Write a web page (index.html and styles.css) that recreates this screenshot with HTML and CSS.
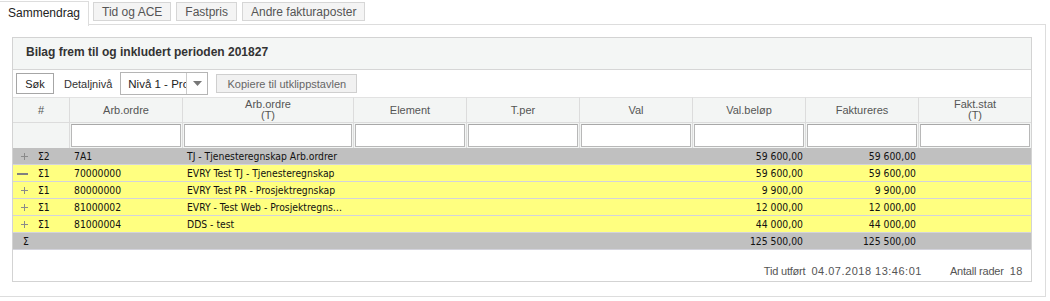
FILE: index.html
```html
<!DOCTYPE html>
<html lang="no">
<head>
    <meta charset="UTF-8">
    <title>Sammendrag</title>
    <link rel="stylesheet" href="styles.css">
</head>
<body>
    <div class="tabs">
        <div class="tab active">Sammendrag</div>
        <div class="tab">Tid og ACE</div>
        <div class="tab">Fastpris</div>
        <div class="tab">Andre fakturaposter</div>
    </div>

    <div class="frame">
        <div class="panel">
            <div class="panel-head">Bilag frem til og inkludert perioden 201827</div>

            <div class="toolbar">
                <button class="btn">Søk</button>
                <span class="lbl">Detaljnivå</span>
                <div class="select">
                    <span class="sel-val">Nivå 1 - Prosjekt</span>
                    <span class="sel-btn">
                        <svg width="9" height="5" viewBox="0 0 9 5"><path d="M0 0h9L4.5 5z" fill="#777"/></svg>
                    </span>
                </div>
                <button class="btn btn-grey">Kopiere til utklippstavlen</button>
            </div>

            <table class="grid">
                <colgroup>
                    <col style="width:57px">
                    <col style="width:113px">
                    <col style="width:171px">
                    <col style="width:113px">
                    <col style="width:113px">
                    <col style="width:113px">
                    <col style="width:113px">
                    <col style="width:113px">
                    <col style="width:112px">
                </colgroup>
                <thead>
                    <tr class="head">
                        <th>#</th>
                        <th>Arb.ordre</th>
                        <th>Arb.ordre<br>(T)</th>
                        <th>Element</th>
                        <th>T.per</th>
                        <th>Val</th>
                        <th>Val.beløp</th>
                        <th>Faktureres</th>
                        <th>Fakt.stat<br>(T)</th>
                    </tr>
                    <tr class="filter">
                        <td></td>
                        <td><input type="text"></td>
                        <td><input type="text"></td>
                        <td><input type="text"></td>
                        <td><input type="text"></td>
                        <td><input type="text"></td>
                        <td><input type="text"></td>
                        <td><input type="text"></td>
                        <td><input type="text"></td>
                    </tr>
                </thead>
                <tbody>
                    <tr class="grey">
                        <td><span class="tog plus"></span><span class="sig">Σ2</span></td>
                        <td>7A1</td>
                        <td class="clip">TJ - Tjenesteregnskap Arb.ordrer</td>
                        <td></td><td></td><td></td>
                        <td class="num">59 600,00</td>
                        <td class="num">59 600,00</td>
                        <td></td>
                    </tr>
                    <tr class="yellow">
                        <td><span class="tog minus"></span><span class="sig">Σ1</span></td>
                        <td>70000000</td>
                        <td class="clip">EVRY Test TJ - Tjenesteregnskap</td>
                        <td></td><td></td><td></td>
                        <td class="num">59 600,00</td>
                        <td class="num">59 600,00</td>
                        <td></td>
                    </tr>
                    <tr class="yellow">
                        <td><span class="tog plus"></span><span class="sig">Σ1</span></td>
                        <td>80000000</td>
                        <td class="clip">EVRY Test PR - Prosjektregnskap</td>
                        <td></td><td></td><td></td>
                        <td class="num">9 900,00</td>
                        <td class="num">9 900,00</td>
                        <td></td>
                    </tr>
                    <tr class="yellow">
                        <td><span class="tog plus"></span><span class="sig">Σ1</span></td>
                        <td>81000002</td>
                        <td class="clip">EVRY - Test Web - Prosjektregnskap</td>
                        <td></td><td></td><td></td>
                        <td class="num">12 000,00</td>
                        <td class="num">12 000,00</td>
                        <td></td>
                    </tr>
                    <tr class="yellow">
                        <td><span class="tog plus"></span><span class="sig">Σ1</span></td>
                        <td>81000004</td>
                        <td class="clip">DDS - test</td>
                        <td></td><td></td><td></td>
                        <td class="num">44 000,00</td>
                        <td class="num">44 000,00</td>
                        <td></td>
                    </tr>
                    <tr class="grey sum">
                        <td><span class="sig">Σ</span></td>
                        <td></td><td></td><td></td><td></td><td></td>
                        <td class="num">125 500,00</td>
                        <td class="num">125 500,00</td>
                        <td></td>
                    </tr>
                </tbody>
            </table>

            <div class="foot">
                <span class="key">Tid utført</span><span class="val">04.07.2018 13:46:01</span>
                <span class="key gap">Antall rader</span><span class="val">18</span>
            </div>
        </div>
    </div>
</body>
</html>
```

FILE: styles.css
```css
body {
    margin: 0;
    font-family: "Liberation Sans", Arial, sans-serif;
    background-color: #fff;
    color: #333;
}

/* tab strip above the frame */
.tabs {
    display: flex;
    align-items: flex-start;
    height: 24px;
}
.tab {
    font-size: 12px;
    height: 17px;
    line-height: 18px;
    margin-top: 2px;
    margin-left: 5px;
    padding: 0 8px;
    border: 1px solid #d6d6d6;
    background: #f4f4f4;
    color: #555;
}
.tab.active {
    position: relative;
    z-index: 1;
    margin: 1px 0 0 0;
    height: 24px;
    line-height: 22px;
    border: none;
    border-top: 1px solid #ddd;
    border-right: 1px solid #ddd;
    background: #fff;
    color: #222;
}
.tab.active + .tab {
    margin-left: 4px;
}

.frame {
    width: 1045px;
    height: 271px;
    border: 1px solid #ddd;
    border-left: none;
}
.panel {
    margin: 12px 13px 0 12px;
    border: 1px solid #d3d3d3;
}
.panel-head {
    height: 31px;
    line-height: 29px;
    padding-left: 13px;
    border-bottom: 1px solid #d6d6d6;
    background: #f4f6f5;
    font-size: 12px;
    font-weight: bold;
    color: #333;
}

/* search row */
.toolbar {
    display: flex;
    align-items: center;
    height: 27px;
    padding-left: 3px;
    font-size: 11px;
    color: #333;
}
.btn {
    font-family: inherit;
    font-size: 11px;
    height: 21px;
    width: 38px;
    padding: 0;
    border: 1px solid #a6a6a6;
    background: #fff;
    color: #222;
}
.btn-grey {
    width: 141px;
    height: 19px;
    margin-left: 8px;
    border-color: #cfcfcf;
    background: #f1f1f1;
    color: #666;
}
.lbl {
    margin-left: 10px;
}
.select {
    display: flex;
    margin-left: 8px;
    width: 86px;
    height: 21px;
    border: 1px solid #b5b5b5;
    background: #fff;
}
.sel-val {
    width: 58px;
    padding-left: 7px;
    overflow: hidden;
    white-space: nowrap;
    line-height: 23px;
    font-size: 11.5px;
    color: #222;
}
.sel-btn {
    flex: 1;
    display: flex;
    align-items: center;
    justify-content: center;
    border-left: 1px solid #ccc;
}

/* the grid */
.grid {
    width: 1018px;
    table-layout: fixed;
    border-collapse: separate;
    border-spacing: 0;
    font-size: 11px;
}
.head th {
    height: 24px;
    padding: 0;
    border-top: 1px solid #e2e2e2;
    border-right: 1px solid #dcdcdc;
    border-bottom: 1px solid #dcdcdc;
    background: #f3f5f4;
    font-weight: normal;
    line-height: 11px;
    color: #555;
    vertical-align: middle;
}
.filter td {
    height: 22px;
    padding: 1px;
    border-right: 1px solid #dcdcdc;
    background: #f3f5f4;
}
.head th:last-child,
.filter td:last-child {
    border-right: none;
}
.filter input {
    display: block;
    width: 100%;
    height: 23px;
    box-sizing: border-box;
    margin: 0;
    border: 1px solid #b8b8b8;
    border-top-color: #a8a8a8;
    background: #fff;
}

tbody td {
    height: 16px;
    padding: 0 3px 0 4px;
    border-bottom: 1px solid #d3d3dc;
    font-family: "DejaVu Sans Condensed", "DejaVu Sans", sans-serif;
    font-size: 10.3px;
    color: #111;
    white-space: nowrap;
    overflow: hidden;
}
.grey td {
    background: #c0c0c0;
}
.yellow td {
    background: #ffff80;
}
.num {
    text-align: right;
}
.clip {
    padding-right: 10px;
    text-overflow: ellipsis;
}

.tog {
    display: inline-block;
    width: 11px;
    height: 9px;
    vertical-align: -1px;
    background: no-repeat center;
}
.tog.plus {
    background-image: linear-gradient(#8a8a8a, #8a8a8a), linear-gradient(#8a8a8a, #8a8a8a);
    background-size: 7px 1px, 1px 7px;
    background-position: 4px 4px, 7px 1px;
}
.tog.minus {
    background-image: linear-gradient(#808080, #808080);
    background-size: 11px 2px;
    background-position: 0 4px;
}
.sig {
    margin-left: 10px;
}
.sum .sig {
    margin-left: 6px;
}

.foot {
    display: flex;
    justify-content: flex-end;
    align-items: baseline;
    height: 16px;
    padding: 15px 8px 0 0;
    font-size: 11px;
    color: #555;
}
.foot .key {
    letter-spacing: -0.2px;
}
.foot .val {
    margin-left: 6px;
    letter-spacing: 0.5px;
}
.foot .gap {
    margin-left: 28px;
}
```
